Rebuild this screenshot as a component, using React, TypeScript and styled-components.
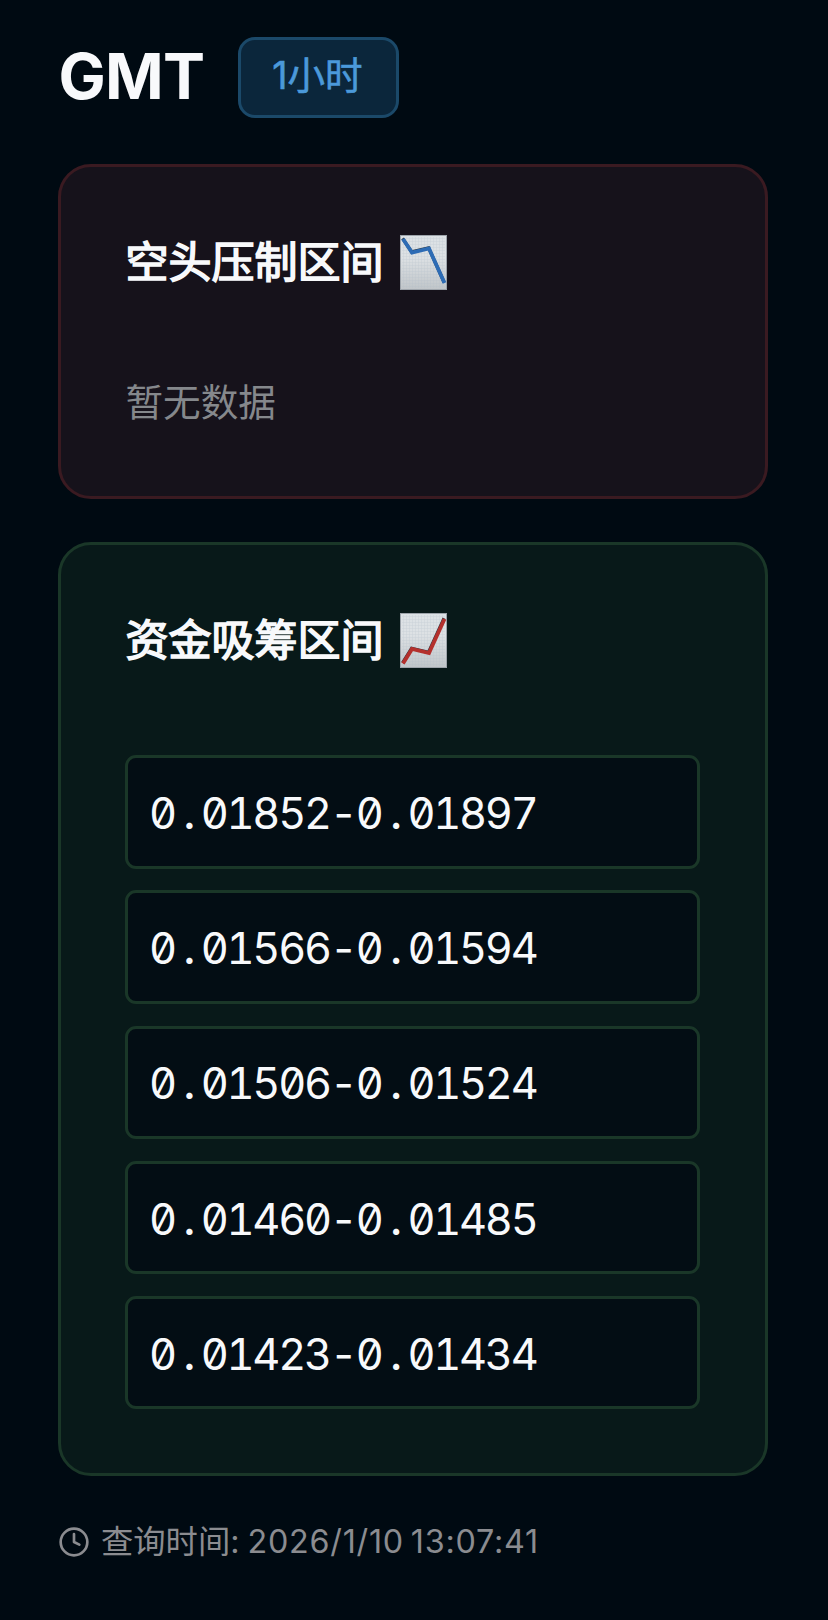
import React from "react";
import styled, { createGlobalStyle } from "styled-components";
import { Clock } from "lucide-react";

const Global = createGlobalStyle`
  * { box-sizing: border-box; }
  html, body { margin: 0; background: #000a12; }
  body { font-family: Inter, "Noto Sans CJK SC", sans-serif; color: #f8f9fb; }
`;

const Page = styled.main`
  min-height: 1620px;
  padding: 37px 60px 0 58px;
  display: flex;
  flex-direction: column;
  background: #000a12;
`;

const Header = styled.header`
  display: flex;
  align-items: center;
  height: 81px;
  margin-bottom: 46px;
`;

const Symbol = styled.h1`
  margin: 0;
  width: 179.5px;
  padding: 0 0 4px 0.5px;
  font-size: 63px;
  line-height: 76px;
  font-weight: 700;
  letter-spacing: -0.7px;
`;

const Badge = styled.span`
  width: 161px;
  height: 81px;
  display: flex;
  align-items: center;
  justify-content: center;
  padding: 0 1px 4px 0;
  border: 3px solid #1b4969;
  border-radius: 17px;
  background: #0b263b;
  color: #4b99da;
  font-size: 37.5px;
  line-height: 50px;
  -webkit-text-stroke: 0.6px #4b99da;
  white-space: nowrap;
`;

const Card = styled.section<{ $tone: "short" | "long" }>`
  width: 709.5px;
  height: ${(p) => (p.$tone === "short" ? 335 : 934)}px;
  padding: 62.5px 64.5px 0 64px;
  margin-bottom: 43px;
  border: 3px solid ${(p) => (p.$tone === "short" ? "#3a1a21" : "#1a3728")};
  border-radius: 33px;
  background: ${(p) => (p.$tone === "short" ? "#16121b" : "#081919")};
`;

const Title = styled.h2`
  margin: 0;
  height: 65px;
  display: flex;
  align-items: center;
  gap: 16px;
  padding-left: 0.5px;
  font-size: 43px;
  line-height: 65px;
  font-weight: 400;
  -webkit-text-stroke: 1.6px #f8f9fb;
`;

const ChartIcon = styled.svg`
  width: 47px;
  height: 55px;
  flex: none;
`;

const Empty = styled.p`
  margin: 81px 0 0 0.5px;
  font-size: 37.6px;
  line-height: 54px;
  color: #85888c;
`;

const List = styled.ul`
  margin: 82.7px 0 0;
  padding: 0;
  list-style: none;
  display: flex;
  flex-direction: column;
  gap: 21.7px;
`;

const Range = styled.li`
  height: 113.5px;
  display: flex;
  align-items: center;
  padding: 2px 20px 0 21px;
  border: 3px solid #1a3728;
  border-radius: 11px;
  background: #030d14;
  font-size: 43.3px;
  letter-spacing: -2.25px;
  font-feature-settings: "tnum", "zero";
  white-space: nowrap;
`;

const Point = styled.span`
  display: inline-block;
  width: 25.9px;
  padding-left: 1px;
  text-align: center;
  font-weight: 500;
`;

const Footer = styled.footer`
  display: flex;
  align-items: center;
  height: 46px;
  color: #8b8c90;
  font-size: 32.3px;
  line-height: 46px;
  white-space: nowrap;
`;

const FooterLabel = styled.span`
  margin: 0 8px 0 11px;
`;

const Timestamp = styled.time`
  letter-spacing: 0.75px;
  word-spacing: -3px;
`;

const ranges = [
  "0.01852-0.01897",
  "0.01566-0.01594",
  "0.01506-0.01524",
  "0.01460-0.01485",
  "0.01423-0.01434",
];

function Price({ value }: { value: string }) {
  return (
    <span>
      {value.split(".").map((part, i) => (
        <React.Fragment key={i}>
          {i > 0 && <Point>.</Point>}
          {part}
        </React.Fragment>
      ))}
    </span>
  );
}

function Chart({ down }: { down?: boolean }) {
  const id = down ? "paper-down" : "paper-up";
  const points = down ? "3,4 12,17.5 29,13.5 44.5,48" : "3,50.5 12,36 29,40 44.5,6";
  return (
    <ChartIcon viewBox="0 0 47 55" role="img" aria-label={down ? "📉" : "📈"}>
      <defs>
        <linearGradient id={id} x1="0" y1="0" x2="0" y2="1">
          <stop offset="0" stopColor="#dce1e5" />
          <stop offset="0.4" stopColor="#dde1e4" />
          <stop offset="1" stopColor="#c0c5c9" />
        </linearGradient>
        <pattern id={id + "-grid"} width="3" height="3" patternUnits="userSpaceOnUse">
          <path d="M0 .5H3M.5 0V3" stroke="#aebbc6" strokeWidth=".5" opacity=".4" />
        </pattern>
      </defs>
      <rect x=".5" y=".5" width="46" height="54" fill={`url(#${id})`} stroke="#9da4ab" strokeWidth="1" />
      <rect x="2" y="2" width="43" height="51" fill={`url(#${id}-grid)`} stroke="none" />
      <polyline points={points} fill="none" stroke="#303941" strokeWidth="3.3" transform="translate(-.4 -.7)" />
      <polyline points={points} fill="none" stroke={down ? "#2d6cb5" : "#b4302d"} strokeWidth="3.8" />
    </ChartIcon>
  );
}

export default function App() {
  return (
    <>
      <Global />
      <Page>
        <Header>
          <Symbol>GMT</Symbol>
          <Badge>1小时</Badge>
        </Header>
        <Card $tone="short">
          <Title>空头压制区间 <Chart down /></Title>
          <Empty>暂无数据</Empty>
        </Card>
        <Card $tone="long">
          <Title>资金吸筹区间 <Chart /></Title>
          <List>
            {ranges.map((r) => (
              <Range key={r}><Price value={r} /></Range>
            ))}
          </List>
        </Card>
        <Footer>
          <Clock size={32} strokeWidth={2} />
          <FooterLabel>查询时间:</FooterLabel>
          <Timestamp>2026/1/10 13:07:41</Timestamp>
        </Footer>
      </Page>
    </>
  );
}
